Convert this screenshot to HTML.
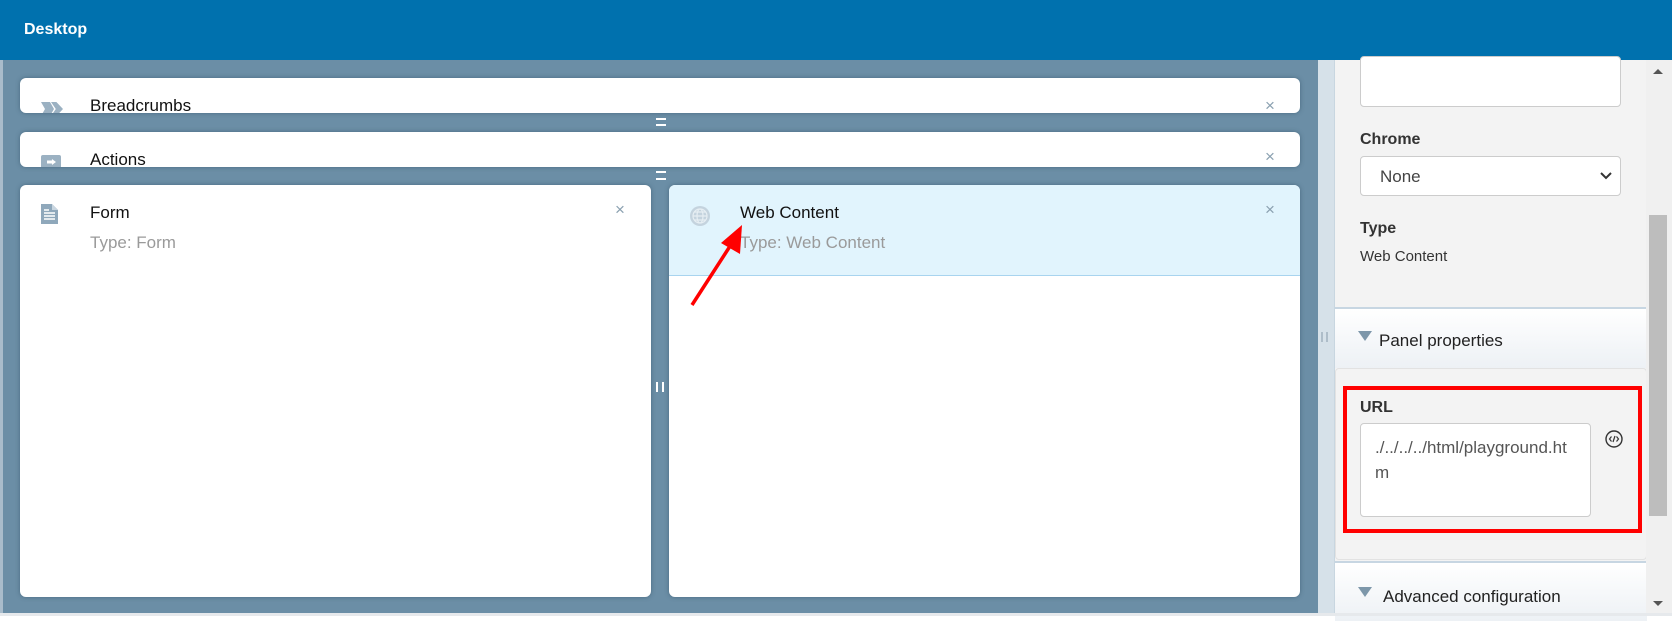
<!DOCTYPE html>
<html><head><meta charset="utf-8"><style>
*{box-sizing:border-box;margin:0;padding:0}
body{width:1672px;height:616px;overflow:hidden;font-family:"Liberation Sans",Arial,sans-serif;background:#fff;position:relative}
.hdr{position:absolute;left:0;top:0;width:1672px;height:60px;background:#0071ae;color:#fff;font-weight:bold;font-size:16px;padding:21px 0 0 24px}
.main{position:absolute;left:0;top:60px;width:1318px;height:556px;background:#6b8ea6;border-left:3px solid #a9bccb}
.card{position:absolute;background:#fff;border-radius:6px;overflow:hidden;box-shadow:0 0 4px rgba(40,70,90,.5)}
.t{position:absolute;font-size:17px;color:#111}
.g{position:absolute;font-size:17px;color:#9a9a9a}
.x{position:absolute;font-size:17px;color:#8aa0b0}
.eq{position:absolute;width:10px;height:2px;background:#fff}
.split{position:absolute;left:1318px;top:60px;width:16px;height:556px;background:#d6e1e9}
.rp{position:absolute;left:1334px;top:60px;width:312px;height:556px;background:#f3f3f3;border-left:1px solid #c8d6e0}
.lbl{position:absolute;font-size:16px;font-weight:bold;color:#333}
.sec{position:absolute;left:0;width:312px;background:linear-gradient(#fff,#edf1f5);border-top:2px solid #c7d6e2;font-size:17px;color:#222}
.tri{position:absolute;width:0;height:0;border-left:7px solid transparent;border-right:7px solid transparent;border-top:10px solid #7d97aa}
.sb{position:absolute;left:1646px;top:60px;width:26px;height:556px;background:#f0f0f0}
</style></head><body>
<div class="hdr">Desktop</div>
<div class="main"></div>
<!-- Breadcrumbs -->
<div class="card" style="left:20px;top:78px;width:1280px;height:35px">
<div style="position:absolute;left:21px;top:24px;width:20px;height:14px;background:#9bb1c2;clip-path:polygon(0 0,45% 0,65% 50%,45% 100%,0 100%,20% 50%);"></div>
<div style="position:absolute;left:31px;top:24px;width:12px;height:14px;background:#9bb1c2;clip-path:polygon(0 0,45% 0,100% 50%,45% 100%,0 100%,40% 50%);"></div>
<div class="t" style="left:70px;top:18px">Breadcrumbs</div>
<div class="x" style="left:1245px;top:18px">×</div>
</div>
<div class="eq" style="left:656px;top:118px"></div><div class="eq" style="left:656px;top:124px"></div>
<!-- Actions -->
<div class="card" style="left:20px;top:132px;width:1280px;height:35px">
<div style="position:absolute;left:21px;top:23px;width:20px;height:14px;background:#9bb1c2;border-radius:2px"></div>
<div style="position:absolute;left:27px;top:27px;width:9px;height:6px;background:#fff;clip-path:polygon(0 25%,55% 25%,55% 0,100% 50%,55% 100%,55% 75%,0 75%)"></div>
<div class="t" style="left:70px;top:18px">Actions</div>
<div class="x" style="left:1245px;top:15px">×</div>
</div>
<div class="eq" style="left:656px;top:171px"></div><div class="eq" style="left:656px;top:178px"></div>
<!-- Form -->
<div class="card" style="left:20px;top:185px;width:631px;height:412px">
<svg style="position:absolute;left:21px;top:19px" width="17" height="20" viewBox="0 0 17 20"><path d="M0 0H11L17 6V20H0Z" fill="#8fa8bb"/><path d="M11 0V6H17" fill="#c9d6e0"/><g stroke="#fff" stroke-width="1.5"><path d="M3 9H14M3 12H14M3 15H14M3 6H8"/></g></svg>
<div class="t" style="left:70px;top:18px">Form</div>
<div class="g" style="left:70px;top:48px">Type: Form</div>
<div class="x" style="left:595px;top:15px">×</div>
</div>
<div style="position:absolute;left:656px;top:382px;width:2px;height:10px;background:#fff"></div><div style="position:absolute;left:662px;top:382px;width:2px;height:10px;background:#fff"></div>
<!-- Web content -->
<div class="card" style="left:669px;top:185px;width:631px;height:412px">
<div style="position:absolute;left:0;top:0;width:631px;height:91px;background:#e1f4fd;border-bottom:1px solid #a8d4ef"></div>
<svg style="position:absolute;left:20px;top:20px" width="22" height="22" viewBox="0 0 22 22"><circle cx="11" cy="11" r="10" fill="#c4d3de"/><g fill="none" stroke="#e6eef3" stroke-width="1.2"><circle cx="11" cy="11" r="7"/><ellipse cx="11" cy="11" rx="3" ry="7"/><path d="M4 11H18M5 7H17M5 15H17"/></g></svg>
<div class="t" style="left:71px;top:18px">Web Content</div>
<div class="g" style="left:71px;top:48px">Type: Web Content</div>
<div class="x" style="left:596px;top:15px">×</div>
</div>
<svg style="position:absolute;left:0;top:0" width="1672" height="616"><line x1="692" y1="305" x2="734" y2="240" stroke="#f00" stroke-width="3.5"/><polygon points="742,225 740,254 721,243" fill="#f00"/></svg>
<div class="split"><div style="position:absolute;left:3px;top:272px;width:2px;height:10px;background:#aebdc9"></div><div style="position:absolute;left:8px;top:272px;width:2px;height:10px;background:#aebdc9"></div></div>
<div class="rp">
<div style="position:absolute;left:25px;top:-4px;width:261px;height:51px;background:#fff;border:1px solid #ccc;border-radius:4px"></div>
<div class="lbl" style="left:25px;top:71px">Chrome</div>
<div style="position:absolute;left:25px;top:96px;width:261px;height:40px;background:#fff;border:1px solid #ccc;border-radius:4px;font-size:17px;color:#444;padding:10px 0 0 19px">None
<svg style="position:absolute;right:8px;top:15px" width="12" height="8" viewBox="0 0 12 8"><path d="M1 1L6 6L11 1" stroke="#333" stroke-width="2" fill="none"/></svg></div>
<div class="lbl" style="left:25px;top:160px">Type</div>
<div style="position:absolute;left:25px;top:188px;font-size:15px;color:#333">Web Content</div>
<div class="sec" style="top:247px;height:61px"><div class="tri" style="left:23px;top:22px"></div><div style="position:absolute;left:44px;top:22px">Panel properties</div></div>
<div style="position:absolute;left:0;top:308px;width:312px;height:192px;border:1px solid #e2e2e2;border-radius:4px"></div>
<div style="position:absolute;left:8px;top:326px;width:299px;height:147px;border:4px solid #f00"></div>
<div class="lbl" style="left:25px;top:339px">URL</div>
<div style="position:absolute;left:25px;top:363px;width:231px;height:94px;background:#fff;border:1px solid #ccc;border-radius:4px;font-size:17px;color:#555;padding:11px 0 0 14px;line-height:25px">./../../../html/playground.ht<br>m</div>
<svg style="position:absolute;left:270px;top:370px" width="18" height="18" viewBox="0 0 18 18"><circle cx="9" cy="9" r="8" fill="none" stroke="#333" stroke-width="1.4"/><path d="M6.5 6.5L4.5 9L6.5 11.5M11.5 6.5L13.5 9L11.5 11.5M10 6L8 12" stroke="#333" stroke-width="1.2" fill="none"/></svg>
<div class="sec" style="top:501px;height:60px"><div class="tri" style="left:23px;top:24px"></div><div style="position:absolute;left:48px;top:24px">Advanced configuration</div></div>
</div>
<div class="sb">
<div style="position:absolute;left:7px;top:9px;border-left:5px solid transparent;border-right:5px solid transparent;border-bottom:5px solid #555"></div>
<div style="position:absolute;left:3px;top:155px;width:18px;height:301px;background:#bdbdbd"></div>
<div style="position:absolute;left:7px;top:541px;border-left:5px solid transparent;border-right:5px solid transparent;border-top:5px solid #555"></div>
</div>
<div style="position:absolute;left:0;top:613px;width:1672px;height:3px;background:#e6e9ec"></div>
</body></html>
